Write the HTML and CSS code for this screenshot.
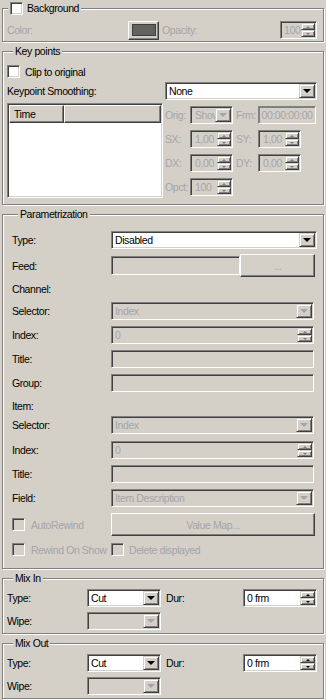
FILE: index.html
```html
<!DOCTYPE html>
<html lang="en">
  <head>
    <title>Layer properties</title>
    <meta charset="utf-8">
    <meta name="viewport" content="width=device-width, initial-scale=1.0">
    <link rel="stylesheet" href="styles.css">
  </head>

  <body>
    <div class="panel">

      <!-- background -->
      <section class="group">
        <div class="group__title group__title--check"><span class="check"></span><span>Background</span></div>
        <div class="bg-row">
          <span class="bg-row__label dis">Color:</span>
          <span class="btn swatch"><span class="swatch__fill"></span></span>
          <span class="bg-row__opacity dis">Opacity:</span>
          <span class="field field--dis spin opacity">
            <span class="field__text">100</span>
            <span class="spin__btns"><span class="btn spin__btn"><i class="arr-up"></i></span><span class="btn spin__btn"><i class="arr-down"></i></span></span>
          </span>
        </div>
      </section>

      <!-- key points -->
      <section class="group group--keys">
        <div class="group__title">Key points</div>
        <div class="check-row check-row--clip"><span class="check"></span><span>Clip to original</span></div>
        <div class="krow">
          <span class="krow__label">Keypoint Smoothing:</span>
          <span class="field combo smoothing"><span class="field__text">None</span><span class="btn combo__btn"><i class="arr"></i></span></span>
        </div>
        <div class="keys">
          <div class="list">
            <div class="list__head">
              <span class="btn list__col list__col--time">Time</span>
              <span class="btn list__col"></span>
            </div>
          </div>
          <div class="keys__props">
            <span class="dis">Orig:</span>
            <span class="field field--dis combo"><span class="field__text">Show</span><span class="btn combo__btn"><i class="arr arr--dis"></i></span></span>
            <span class="keys__label2 dis">Frm:</span>
            <span class="field field--dis field--flat frm"><span class="field__text">00:00:00:00</span></span>

            <span class="dis">SX:</span>
            <span class="field field--dis spin"><span class="field__text">1,00</span><span class="spin__btns"><span class="btn spin__btn"><i class="arr-up"></i></span><span class="btn spin__btn"><i class="arr-down"></i></span></span></span>
            <span class="keys__label2 dis">SY:</span>
            <span class="field field--dis spin spin--short"><span class="field__text">1,00</span><span class="spin__btns"><span class="btn spin__btn"><i class="arr-up"></i></span><span class="btn spin__btn"><i class="arr-down"></i></span></span></span>

            <span class="dis">DX:</span>
            <span class="field field--dis spin"><span class="field__text">0,00</span><span class="spin__btns"><span class="btn spin__btn"><i class="arr-up"></i></span><span class="btn spin__btn"><i class="arr-down"></i></span></span></span>
            <span class="keys__label2 dis">DY:</span>
            <span class="field field--dis spin spin--short"><span class="field__text">0,00</span><span class="spin__btns"><span class="btn spin__btn"><i class="arr-up"></i></span><span class="btn spin__btn"><i class="arr-down"></i></span></span></span>

            <span class="dis">Opct:</span>
            <span class="field field--dis spin"><span class="field__text">100</span><span class="spin__btns"><span class="btn spin__btn"><i class="arr-up"></i></span><span class="btn spin__btn"><i class="arr-down"></i></span></span></span>
          </div>
        </div>
      </section>

      <!-- parametrization -->
      <section class="group group--param">
        <div class="group__title">Parametrization</div>

        <div class="prow prow--first">
          <span class="prow__label">Type:</span>
          <span class="field combo wide"><span class="field__text">Disabled</span><span class="btn combo__btn"><i class="arr"></i></span></span>
        </div>
        <div class="prow prow--feed">
          <span class="prow__label">Feed:</span>
          <span class="field field--dis feed"></span>
          <span class="btn btn--push feed__btn dis">...</span>
        </div>
        <div class="prow prow--text prow--channel"><span class="prow__label">Channel:</span></div>
        <div class="prow">
          <span class="prow__label">Selector:</span>
          <span class="field field--dis combo narrow"><span class="field__text">Index</span><span class="btn combo__btn"><i class="arr arr--dis"></i></span></span>
        </div>
        <div class="prow">
          <span class="prow__label">Index:</span>
          <span class="field field--dis spin narrow"><span class="field__text">0</span><span class="spin__btns"><span class="btn spin__btn"><i class="arr-up"></i></span><span class="btn spin__btn"><i class="arr-down"></i></span></span></span>
        </div>
        <div class="prow">
          <span class="prow__label">Title:</span>
          <span class="field field--dis narrow"></span>
        </div>
        <div class="prow">
          <span class="prow__label">Group:</span>
          <span class="field field--dis narrow"></span>
        </div>
        <div class="prow prow--text prow--item"><span class="prow__label">Item:</span></div>
        <div class="prow prow--after-item">
          <span class="prow__label">Selector:</span>
          <span class="field field--dis combo narrow"><span class="field__text">Index</span><span class="btn combo__btn"><i class="arr arr--dis"></i></span></span>
        </div>
        <div class="prow prow--loose">
          <span class="prow__label">Index:</span>
          <span class="field field--dis spin narrow"><span class="field__text">0</span><span class="spin__btns"><span class="btn spin__btn"><i class="arr-up"></i></span><span class="btn spin__btn"><i class="arr-down"></i></span></span></span>
        </div>
        <div class="prow">
          <span class="prow__label">Title:</span>
          <span class="field field--dis narrow"></span>
        </div>
        <div class="prow">
          <span class="prow__label">Field:</span>
          <span class="field field--dis combo narrow"><span class="field__text">Item Description</span><span class="btn combo__btn"><i class="arr arr--dis"></i></span></span>
        </div>
        <div class="prow prow--buttons">
          <span class="prow__label prow__check"><span class="check check--dis"></span><span class="dis">AutoRewind</span></span>
          <span class="btn btn--push valuemap dis">Value Map...</span>
        </div>
        <div class="prow prow--checks">
          <span class="prow__label prow__check"><span class="check check--dis"></span><span class="dis">Rewind On Show</span></span>
          <span class="prow__check prow__check--del"><span class="check check--dis"></span><span class="dis">Delete displayed</span></span>
        </div>
      </section>

      <!-- mix in -->
      <section class="group group--mix">
        <div class="group__title">Mix In</div>
        <div class="mrow">
          <span class="mrow__label">Type:</span>
          <span class="field combo mix-combo"><span class="field__text">Cut</span><span class="btn combo__btn"><i class="arr"></i></span></span>
          <span class="mrow__dur">Dur:</span>
          <span class="field spin mix-spin"><span class="field__text">0 frm</span><span class="spin__btns"><span class="btn spin__btn"><i class="arr-up arr-up--on"></i></span><span class="btn spin__btn"><i class="arr-down arr-down--on"></i></span></span></span>
        </div>
        <div class="mrow mrow--wipe">
          <span class="mrow__label">Wipe:</span>
          <span class="field field--dis combo mix-combo"><span class="field__text"></span><span class="btn combo__btn"><i class="arr arr--dis"></i></span></span>
        </div>
      </section>

      <!-- mix out -->
      <section class="group group--mix">
        <div class="group__title">Mix Out</div>
        <div class="mrow">
          <span class="mrow__label">Type:</span>
          <span class="field combo mix-combo"><span class="field__text">Cut</span><span class="btn combo__btn"><i class="arr"></i></span></span>
          <span class="mrow__dur">Dur:</span>
          <span class="field spin mix-spin"><span class="field__text">0 frm</span><span class="spin__btns"><span class="btn spin__btn"><i class="arr-up arr-up--on"></i></span><span class="btn spin__btn"><i class="arr-down arr-down--on"></i></span></span></span>
        </div>
        <div class="mrow mrow--wipe">
          <span class="mrow__label">Wipe:</span>
          <span class="field field--dis combo mix-combo"><span class="field__text"></span><span class="btn combo__btn"><i class="arr arr--dis"></i></span></span>
        </div>
      </section>

    </div>
  </body>
</html>
```

FILE: styles.css
```css
:root {
  --face: #d4d0c8;
  --shadow: #808080;
  --dark: #404040;
  --light: #ffffff;
  --disabled: #a4a4aa;
}

html, body {
  margin: 0;
  padding: 0;
}

body {
  width: 326px;
  height: 700px;
  overflow: hidden;
  background-color: var(--face);
  font-family: "Liberation Sans", Arial, sans-serif;
  font-size: 10.5px;
  letter-spacing: -0.4px;
  white-space: nowrap;
  color: #000;
}

.panel {
  padding: 8px 2px 0;
}

.dis {
  color: var(--disabled);
}

/* group boxes */
.group {
  box-sizing: border-box;
  width: 322px;
  margin-bottom: 9px;
  border: 1px solid var(--shadow);
  box-shadow: inset 1px 1px var(--light), 1px 1px var(--light);
}

.group__title {
  display: flex;
  align-items: center;
  gap: 4px;
  width: max-content;
  height: 13px;
  line-height: 13px;
  margin: -7px 0 0 6px;
  padding: 0 2px;
  background-color: var(--face);
}

.group__title--check {
  margin-left: 5px;
}

/* 3d bits */
.btn {
  box-sizing: border-box;
  display: flex;
  align-items: center;
  justify-content: center;
  background-color: var(--face);
  border: 1px solid;
  border-color: var(--face) var(--dark) var(--dark) var(--face);
  box-shadow: inset 1px 1px var(--light), inset -1px -1px var(--shadow);
}

.btn--push {
  border-color: var(--light) var(--dark) var(--dark) var(--light);
  box-shadow: inset -1px -1px var(--shadow);
}

.field {
  box-sizing: border-box;
  display: flex;
  height: 18px;
  padding: 1px;
  background-color: var(--light);
  border: 1px solid;
  border-color: var(--shadow) var(--light) var(--light) var(--shadow);
  box-shadow: inset 1px 1px var(--dark), inset -1px -1px var(--face);
}

.field--dis {
  background-color: var(--face);
  color: var(--disabled);
}

.field--flat {
  box-shadow: inset 1px 1px var(--shadow), inset -1px -1px var(--face);
}

.field__text {
  flex: 1;
  min-width: 0;
  padding-left: 2px;
  line-height: 14px;
  overflow: hidden;
}

.combo__btn {
  flex: none;
  width: 16px;
}

.spin__btns {
  flex: none;
  display: flex;
  flex-direction: column;
  width: 15px;
}

.spin__btn {
  flex: 1;
}

.arr {
  width: 0;
  height: 0;
  border-left: 4px solid transparent;
  border-right: 4px solid transparent;
  border-top: 4px solid #000;
}

.arr--dis {
  border-top-color: var(--disabled);
}

.arr-up,
.arr-down {
  width: 0;
  height: 0;
  border-left: 2px solid transparent;
  border-right: 2px solid transparent;
}

.arr-up {
  border-bottom: 2px solid var(--shadow);
}

.arr-down {
  border-top: 2px solid var(--shadow);
}

.arr-up--on {
  border-bottom-color: #000;
}

.arr-down--on {
  border-top-color: #000;
}

.check {
  box-sizing: border-box;
  flex: none;
  width: 13px;
  height: 13px;
  background-color: var(--light);
  border: 1px solid;
  border-color: var(--shadow) var(--light) var(--light) var(--shadow);
  box-shadow: inset 1px 1px var(--dark), inset -1px -1px var(--face);
}

.check--dis {
  background-color: var(--face);
}

/* background */
.bg-row {
  display: flex;
  align-items: center;
  height: 18px;
  margin: 6px 0 2px;
  padding: 0 6px 0 4px;
}

.bg-row__label {
  width: 121px;
}

.swatch {
  width: 31px;
  height: 19px;
  border-color: var(--light) var(--dark) var(--dark) var(--light);
  box-shadow: inset -1px -1px var(--shadow);
}

.swatch__fill {
  box-sizing: border-box;
  width: 24px;
  height: 12px;
  background-color: #62625e;
  border: 1px solid #3e3e3c;
}

.bg-row__opacity {
  margin-left: 3px;
}

.opacity {
  width: 37px;
  margin-left: auto;
}

.opacity .spin__btns {
  width: 14px;
}

/* key points */
.group--keys {
  padding: 0 0 6px 4px;
}

.check-row {
  display: flex;
  align-items: center;
  gap: 5px;
  height: 13px;
}

.check-row--clip {
  margin-top: 7px;
}

.krow {
  display: flex;
  align-items: center;
  height: 18px;
  margin-top: 4px;
}

.krow__label {
  width: 158px;
}

.smoothing {
  width: 152px;
}

.keys {
  display: flex;
  margin-top: 3px;
}

.list {
  box-sizing: border-box;
  width: 156px;
  height: 95px;
  padding: 1px;
  background-color: var(--light);
  border: 1px solid;
  border-color: var(--shadow) var(--light) var(--light) var(--shadow);
  box-shadow: inset 1px 1px var(--dark), inset -1px -1px var(--face);
}

.list__head {
  display: flex;
  height: 18px;
}

.list__col {
  flex: 1;
  justify-content: flex-start;
  padding-left: 4px;
  border-color: var(--light) var(--dark) var(--dark) var(--light);
  box-shadow: inset -1px -1px var(--shadow);
}

.list__col--time {
  flex: none;
  width: 55px;
}

.keys__props {
  display: grid;
  grid-template-columns: 25px 43px 25px auto;
  grid-auto-rows: 18px;
  row-gap: 6px;
  align-items: center;
  align-content: start;
  margin: 3px 0 0 2px;
}

.keys__props .spin__btns {
  width: 14px;
}

.keys__props .field__text {
  padding-left: 3px;
}

.keys__label2 {
  padding-left: 3px;
}

.frm {
  width: 58px;
}

.keys__props .frm .field__text {
  text-align: center;
  padding: 0;
}

.spin--short {
  width: 43px;
}

/* parametrization */
.group--param {
  padding: 0 0 12px 9px;
}

.prow {
  display: flex;
  align-items: center;
  height: 18px;
  margin-top: 6px;
}

.prow--first {
  margin-top: 10px;
}

.prow--feed {
  height: 23px;
  margin-top: 5px;
}

.prow--text {
  height: 14px;
}

.prow--channel {
  margin-top: 5px;
}

.prow--item {
  margin-top: 7px;
}

.prow--after-item {
  margin-top: 3px;
}

.prow--loose {
  margin-top: 7px;
}

.prow--buttons {
  height: 23px;
}

.prow--checks {
  height: 13px;
  margin-top: 7px;
}

.prow__label {
  flex: none;
  width: 99px;
}

.prow__check {
  display: flex;
  align-items: center;
  gap: 6px;
}

.prow__check--del {
  gap: 5px;
}

.wide {
  width: 206px;
}

.narrow {
  width: 203px;
}

.feed {
  width: 129px;
  height: 19px;
}

.feed__btn {
  width: 75px;
  height: 23px;
}

.valuemap {
  width: 204px;
  height: 23px;
}

/* mix in / out */
.group--mix {
  padding: 0 0 3px 4px;
}

.mrow {
  display: flex;
  align-items: center;
  height: 18px;
  margin-top: 4px;
}

.mrow--wipe {
  margin-top: 5px;
}

.mrow__label {
  width: 80px;
}

.mix-combo {
  width: 74px;
}

.mrow__dur {
  width: 77px;
  margin-left: 5px;
}

.mix-spin {
  width: 74px;
}
```
